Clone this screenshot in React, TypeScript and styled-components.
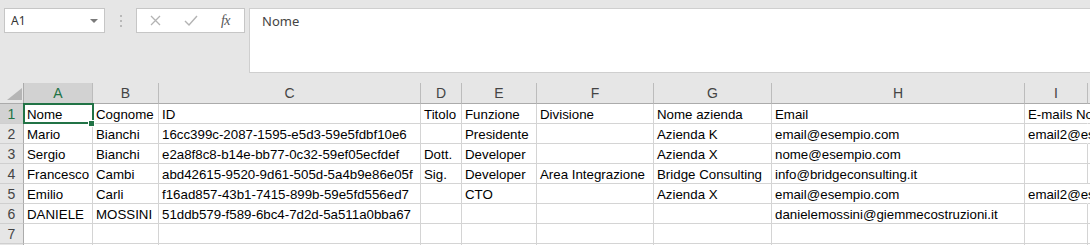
import React from "react";
import styled, { createGlobalStyle } from "styled-components";

const GlobalStyle = createGlobalStyle`
  html, body { margin: 0; padding: 0; }
  body {
    background: #e6e6e6;
    font-family: "Liberation Sans", Arial, sans-serif;
    overflow: hidden;
  }
`;

const Page = styled.div`
  width: 1090px;
  height: 245px;
  overflow: hidden;
  position: relative;
  background: #e6e6e6;
`;

const FormulaArea = styled.div`
  height: 83px;
  box-sizing: border-box;
  display: flex;
  align-items: flex-start;
  padding: 8px 0 0 4px;
`;

const NameBox = styled.div`
  width: 101px;
  height: 25px;
  box-sizing: border-box;
  background: #fff;
  border: 1px solid #c6c6c6;
  display: flex;
  align-items: center;
  justify-content: space-between;
  padding: 0 6px 0 6px;
  font-family: "Noto Sans", sans-serif;
  font-size: 12px;
  color: #333;
`;

const DropArrow = styled.span`
  width: 0;
  height: 0;
  border-left: 4px solid transparent;
  border-right: 4px solid transparent;
  border-top: 4px solid #7a7a7a;
  margin-top: 1px;
`;

const Grip = styled.div`
  width: 31px;
  height: 25px;
  display: flex;
  flex-direction: column;
  align-items: center;
  justify-content: center;
  gap: 3px;
`;

const GripDot = styled.span`
  width: 2px;
  height: 2px;
  background: #b9b9b9;
`;

const FxButtons = styled.div`
  width: 109px;
  height: 25px;
  box-sizing: border-box;
  background: #fff;
  border: 1px solid #c6c6c6;
  display: grid;
  grid-template-columns: 37px 34px 1fr;
  align-items: center;
  justify-items: center;
`;

const FxLabel = styled.span`
  font-family: "Liberation Serif", serif;
  font-style: italic;
  font-size: 14px;
  color: #555;
  letter-spacing: -0.5px;
  margin-left: -1px;
`;

const FormulaInput = styled.div`
  flex: 1;
  margin-left: 4px;
  height: 65px;
  box-sizing: border-box;
  background: #fff;
  border: 1px solid #cfcfcf;
  border-right: none;
  padding: 3px 12px;
  font-family: "Noto Sans", sans-serif;
  font-size: 13px;
  color: #444;
`;

const COLS = [24, 69, 66, 262, 41, 75, 117, 118, 253, 63];

const Sheet = styled.div`
  display: grid;
  grid-template-columns: ${COLS.map((c) => c + "px").join(" ")} 1fr;
  grid-auto-rows: 20px;
  grid-template-rows: 21px;
  background: #fff;
  font-size: 13.3px;
`;

const Corner = styled.div`
  background: #e6e6e6;
  border-right: 1px solid #ababab;
  border-bottom: 1px solid #ababab;
  box-sizing: border-box;
  display: flex;
  align-items: flex-end;
  justify-content: flex-end;
  padding: 0 1px 3px 0;
`;

const ColHeader = styled.div<{ $selected?: boolean }>`
  box-sizing: border-box;
  background: ${(p) => (p.$selected ? "#d2d2d2" : "#e6e6e6")};
  border-right: 1px solid #bcbcbc;
  border-bottom: 1px solid ${(p) => (p.$selected ? "#217346" : "#ababab")};
  text-align: center;
  line-height: 20px;
  color: ${(p) => (p.$selected ? "#217346" : "#444")};
  font-size: 14px;
`;

const RowHeader = styled.div<{ $selected?: boolean }>`
  box-sizing: border-box;
  background: ${(p) => (p.$selected ? "#d2d2d2" : "#e6e6e6")};
  border-right: 1px solid ${(p) => (p.$selected ? "#217346" : "#ababab")};
  border-bottom: 1px solid #cfcfcf;
  text-align: center;
  line-height: 19px;
  padding-top: 1px;
  color: ${(p) => (p.$selected ? "#217346" : "#444")};
  font-size: 14px;
`;

const Cell = styled.div<{ $spill?: boolean }>`
  box-sizing: border-box;
  border-right: 1px solid ${(p) => (p.$spill ? "transparent" : "#d4d4d4")};
  border-bottom: 1px solid #d4d4d4;
  line-height: 19px;
  padding: 1px 3px 0 3px;
  white-space: nowrap;
  overflow: ${(p) => (p.$spill ? "visible" : "hidden")};
  position: ${(p) => (p.$spill ? "relative" : "static")};
  z-index: ${(p) => (p.$spill ? 1 : 0)};
  color: #000;
`;

const Selection = styled.div`
  position: absolute;
  left: 23px;
  top: 103px;
  width: 71px;
  height: 21px;
  box-sizing: border-box;
  border: 2px solid #217346;
  pointer-events: none;
`;

const FillHandle = styled.div`
  position: absolute;
  left: 88px;
  top: 120px;
  width: 5px;
  height: 5px;
  background: #217346;
  border: 1px solid #fff;
`;

const letters = ["A", "B", "C", "D", "E", "F", "G", "H", "I", ""];

const data: string[][] = [
  ["Nome", "Cognome", "ID", "Titolo", "Funzione", "Divisione", "Nome azienda", "Email", "E-mails Non-primarie", ""],
  ["Mario", "Bianchi", "16cc399c-2087-1595-e5d3-59e5fdbf10e6", "", "Presidente", "", "Azienda K", "email@esempio.com", "email2@esempio.com", ""],
  ["Sergio", "Bianchi", "e2a8f8c8-b14e-bb77-0c32-59ef05ecfdef", "Dott.", "Developer", "", "Azienda X", "nome@esempio.com", "", ""],
  ["Francesco", "Cambi", "abd42615-9520-9d61-505d-5a4b9e86e05f", "Sig.", "Developer", "Area Integrazione", "Bridge Consulting", "info@bridgeconsulting.it", "", ""],
  ["Emilio", "Carli", "f16ad857-43b1-7415-899b-59e5fd556ed7", "", "CTO", "", "Azienda X", "email@esempio.com", "email2@esempio.com", ""],
  ["DANIELE", "MOSSINI", "51ddb579-f589-6bc4-7d2d-5a511a0bba67", "", "", "", "", "danielemossini@giemmecostruzioni.it", "", ""],
  ["", "", "", "", "", "", "", "", "", ""],
  ["", "", "", "", "", "", "", "", "", ""],
];

export default function App() {
  return (
    <>
      <GlobalStyle />
      <Page>
        <FormulaArea>
          <NameBox>
            <span>A1</span>
            <DropArrow />
          </NameBox>
          <Grip>
            <GripDot />
            <GripDot />
            <GripDot />
          </Grip>
          <FxButtons>
            <svg width="11" height="11" viewBox="0 0 11 11">
              <path d="M1 1 L10 10 M10 1 L1 10" stroke="#b3b3b3" strokeWidth="1.3" fill="none" />
            </svg>
            <svg width="14" height="11" viewBox="0 0 14 11">
              <path d="M1 6 L5 10 L13 1" stroke="#b3b3b3" strokeWidth="1.4" fill="none" />
            </svg>
            <FxLabel>fx</FxLabel>
          </FxButtons>
          <FormulaInput>Nome</FormulaInput>
        </FormulaArea>
        <Sheet>
          <Corner>
            <svg width="15" height="12" viewBox="0 0 15 12">
              <polygon points="15,0 15,12 0,12" fill="#b5b5b5" />
            </svg>
          </Corner>
          {letters.map((l, i) => (
            <ColHeader key={"h" + i} $selected={i === 0}>
              {l}
            </ColHeader>
          ))}
          {data.map((row, r) => (
            <React.Fragment key={"r" + r}>
              <RowHeader $selected={r === 0}>{r + 1}</RowHeader>
              {row.map((v, c) => (
                <Cell key={c} $spill={c === 8 && v !== ""}>
                  {v}
                </Cell>
              ))}
            </React.Fragment>
          ))}
        </Sheet>
        <Selection />
        <FillHandle />
      </Page>
    </>
  );
}
